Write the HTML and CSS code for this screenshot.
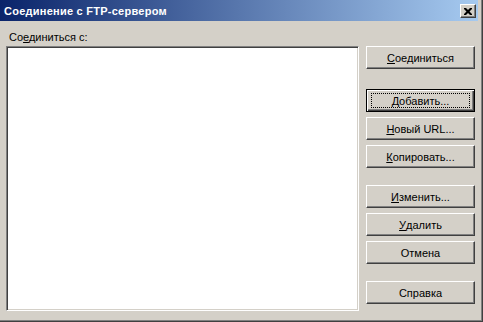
FILE: index.html
```html
<!DOCTYPE html>
<html>
<head>
<meta charset="utf-8">
<link rel="stylesheet" href="styles.css">
</head>
<body>
<div class="window">
  <div class="titlebar">
    <span class="title">Соединение с FTP-сервером</span>
    <span class="close"><svg width="8" height="7" viewBox="0 0 8 7"><path d="M0 0h2l2 2 2-2h2v1l-2.5 2.5L8 6v1H6L4 5 2 7H0V6l2.5-2.5L0 1z" fill="#000"/></svg></span>
  </div>
  <div class="body">
    <div class="left">
      <div class="label">Со<u>е</u>диниться с:</div>
      <div class="list"></div>
    </div>
    <div class="buttons">
      <div class="btn"><u>С</u>оединиться</div>
      <div class="btn default"><span class="focus"><u>Д</u>обавить...</span></div>
      <div class="btn"><u>Н</u>овый URL...</div>
      <div class="btn"><u>К</u>опировать...</div>
      <div class="btn gap"><u>И</u>зменить...</div>
      <div class="btn"><u>У</u>далить</div>
      <div class="btn">Отмена</div>
      <div class="btn gap">Справка</div>
    </div>
  </div>
</div>
</body>
</html>
```
FILE: styles.css
```css
html, body { margin: 0; padding: 0; }
body { width: 483px; height: 322px; background: #d4d0c8; overflow: hidden;
  font-family: Tahoma, "Liberation Sans", sans-serif; font-size: 11px; color: #000; }
.window { width: 483px; height: 322px; box-sizing: border-box;
  border-right: 1px solid #404040; border-bottom: 1px solid #404040;
  box-shadow: inset -1px -1px 0 #808080; display: flex; flex-direction: column; }
.titlebar { height: 21px; flex: none; margin-right: 4px; background: linear-gradient(to right, #0a246a, #a6caf0);
  display: flex; align-items: center; justify-content: space-between; padding: 1px 2px 0 4px; box-sizing: border-box; }
.title { color: #fff; font-weight: bold; font-family: Tahoma, "Liberation Sans", sans-serif; font-size: 11px; letter-spacing: 0.25px; }
.close { width: 16px; height: 14px; box-sizing: border-box; background: #d4d0c8;
  border-top: 1px solid #fff; border-left: 1px solid #fff; border-right: 1px solid #404040; border-bottom: 1px solid #404040;
  box-shadow: inset -1px -1px 0 #808080; display: flex; align-items: center; justify-content: center; }
.body { flex: 1; display: flex; padding: 10px 9px 0 6px; }
.left { width: 353px; display: flex; flex-direction: column; }
.label { height: 15px; padding-left: 3px; line-height: 13px; }
.list { width: 353px; height: 265px; box-sizing: border-box; background: #fff;
  border-top: 1px solid #808080; border-left: 1px solid #808080; border-right: 1px solid #fff; border-bottom: 1px solid #fff;
  box-shadow: inset 1px 1px 0 #404040, inset -1px -1px 0 #d4d0c8; }
.buttons { margin-left: 7px; padding-top: 15px; display: flex; flex-direction: column; gap: 5px; }
.btn { width: 109px; height: 23px; box-sizing: border-box; display: flex; align-items: center; justify-content: center;
  border-top: 1px solid #fff; border-left: 1px solid #fff; border-right: 1px solid #404040; border-bottom: 1px solid #404040;
  box-shadow: inset -1px -1px 0 #808080; }
.btn.default { margin-top: 15px; border: 1px solid #000; box-shadow: inset 1px 1px 0 #fff, inset -1px -1px 0 #404040, inset -2px -2px 0 #808080; }
.btn.gap { margin-top: 12px; }
.focus { display: flex; align-items: center; justify-content: center; width: 99px; height: 15px; box-sizing: border-box; border: 1px dotted #000; }
u { text-decoration: underline; text-underline-offset: 1px; }
```
